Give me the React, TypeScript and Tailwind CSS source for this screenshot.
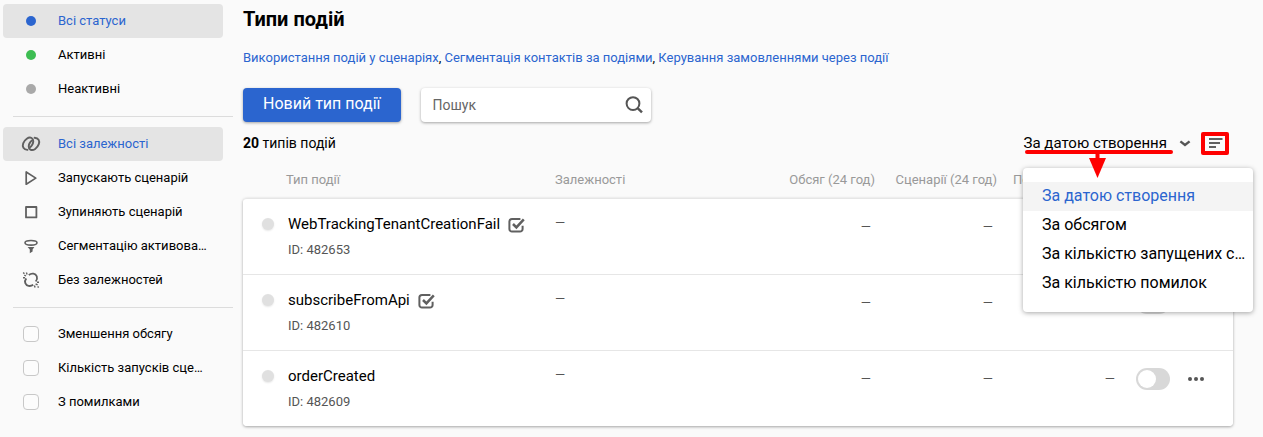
import type { ReactNode } from 'react';

const statuses = [
  { label: 'Всі статуси', color: 'bg-[#2b65cf]', active: true },
  { label: 'Активні', color: 'bg-[#3dbd52]', active: false },
  { label: 'Неактивні', color: 'bg-[#a9a9a9]', active: false },
];

const LinksIcon = () => (
  <svg width="20" height="20" viewBox="0 0 20 20" fill="none" stroke="currentColor" strokeWidth="1.9" strokeLinecap="round">
    <path d="M6.4 15.9C2.6 15.6 1 12.6 2.2 9.4C3.6 5.6 7.6 2.4 10.6 4C13.2 5.5 12.4 9 10.9 11.2C10.4 12 9.8 12.6 9 13.2" />
    <path d="M13.6 3.7C17.4 4 19 7 17.8 10.2C16.4 14 12.4 17.2 9.4 15.6C6.8 14.1 7.6 10.6 9.1 8.4C9.6 7.6 10.2 7 11 6.4" />
  </svg>
);

const PlayIcon = () => (
  <svg width="20" height="20" viewBox="0 0 20 20" fill="none" stroke="currentColor" strokeWidth="1.7" strokeLinejoin="round">
    <path d="M5.2 4V16.2L14.8 10.1Z" />
  </svg>
);

const StopIcon = () => (
  <svg width="20" height="20" viewBox="0 0 20 20" fill="none" stroke="currentColor" strokeWidth="1.8" strokeLinejoin="round">
    <rect x="5" y="5" width="10.4" height="10.4" />
  </svg>
);

const FunnelIcon = () => (
  <svg width="20" height="20" viewBox="0 0 20 20" fill="none" stroke="currentColor" strokeWidth="1.6">
    <ellipse cx="10" cy="6.8" rx="6" ry="2.3" />
    <path d="M6.6 11H13.4L11.6 13.4V15.6L8.8 17.2V13.4Z" fill="currentColor" stroke="none" />
  </svg>
);

const UnlinkIcon = () => (
  <svg width="20" height="20" viewBox="0 0 20 20" fill="none" stroke="currentColor" strokeWidth="1.8">
    <path d="M7.8 5C10.8 2.6 14.5 3.4 15.8 6.4C16.6 8.6 15.9 10.1 14.7 11.5" />
    <path d="M12.2 14.7C9.2 17 5.4 16 4.3 13.2C3.6 11.2 4.2 9.8 5.3 8.4" />
    <path d="M3.3 5.1L5 6M5.4 2.6L6.1 4.4M2 7.8H4M2.2 2.6L3.4 3.8M14.6 13.8L16.6 14.9M13.4 15.4L14.1 17.4M16 12.2H18M16.6 16.4L17.7 17.5" strokeWidth="1.4" />
  </svg>
);

const dependencies = [
  { label: 'Всі залежності', icon: <LinksIcon />, active: true },
  { label: 'Запускають сценарій', icon: <PlayIcon />, active: false },
  { label: 'Зупиняють сценарій', icon: <StopIcon />, active: false },
  { label: 'Сегментацію активова…', icon: <FunnelIcon />, active: false },
  { label: 'Без залежностей', icon: <UnlinkIcon />, active: false },
];

const filters = ['Зменшення обсягу', 'Кількість запусків сце…', 'З помилками'];

const links = [
  'Використання подій у сценаріях',
  'Сегментація контактів за подіями',
  'Керування замовленнями через події',
];

const sortOptions = ['За датою створення', 'За обсягом', 'За кількістю запущених с…', 'За кількістю помилок'];

const events = [
  { name: 'WebTrackingTenantCreationFail', id: 482653, checked: true },
  { name: 'subscribeFromApi', id: 482610, checked: true },
  { name: 'orderCreated', id: 482609, checked: false },
];

function NavItem({ label, active, children }: { label: string; active: boolean; children: ReactNode }) {
  return (
    <li>
      <button
        type="button"
        className={
          active
            ? 'flex h-[34px] w-full items-center rounded bg-[#e4e4e4] pl-[18px] text-left text-[#2b65cf]'
            : 'flex h-[34px] w-full items-center rounded pl-[18px] text-left text-black'
        }
      >
        <span className="mr-[17px] flex w-5 justify-center text-[#606060]">{children}</span>
        <span className="pb-px">{label}</span>
      </button>
    </li>
  );
}

const CheckedIcon = () => (
  <svg width="18" height="16" viewBox="0 0 18 16" fill="none" stroke="#606060">
    <path d="M12.4 2H4A2.6 2.6 0 0 0 1.4 4.6V12A2.6 2.6 0 0 0 4 14.6H12A2.6 2.6 0 0 0 14.6 12V8.8" strokeWidth="2" />
    <path d="M5 7L8.4 10.4L15.8 2.4" strokeWidth="2.5" />
  </svg>
);

function EventRow({ name, id, checked, position }: { name: string; id: number; checked: boolean; position: 'first' | 'middle' | 'last' }) {
  const left = position === 'first' ? 'rounded-tl' : position === 'last' ? 'rounded-bl' : '';
  const right = position === 'first' ? 'rounded-tr' : position === 'last' ? 'rounded-br' : '';
  return (
    <tr className="h-[76px] align-top text-[#555]">
      <td className={`border-t border-[#e6e6e6] bg-white pt-[14px] pl-[19px] ${left}`}>
        <div className="flex items-center">
          <span className="mr-[14px] size-3 shrink-0 rounded-full bg-[#e0e0e0] shadow-[0_1px_2px_rgba(0,0,0,0.1)]" />
          <span className="text-[15px] leading-[22px] text-black">{name}</span>
          {checked && (
            <span className="mt-[2px] ml-2">
              <CheckedIcon />
            </span>
          )}
        </div>
        <div className="mt-[5px] pl-[26px] text-[13px] leading-5">ID: {id}</div>
      </td>
      <td className="border-t border-[#e6e6e6] bg-white pt-[14px] text-[13px] leading-5">—</td>
      <td className="border-t border-[#e6e6e6] bg-white pt-[18px] pr-1 text-right text-[13px] leading-5">—</td>
      <td className="border-t border-[#e6e6e6] bg-white pt-[18px] pr-1 text-right text-[13px] leading-5">—</td>
      <td className="border-t border-[#e6e6e6] bg-white pt-[18px] pr-1 text-right text-[13px] leading-5">—</td>
      <td className={`border-t border-[#e6e6e6] bg-white pt-[17px] pl-[17px] ${right}`}>
        <div className="flex items-center gap-[18px]">
          <input
            type="checkbox"
            role="switch"
            aria-label={name}
            className="h-[22px] w-[34px] appearance-none rounded-full bg-[#d8d8d8] p-[2px] before:block before:size-[18px] before:rounded-full before:bg-white"
          />
          <button type="button" aria-label="Меню">
            <svg width="16" height="6" viewBox="0 0 16 6" fill="#555">
              <circle cx="2" cy="3" r="2" />
              <circle cx="8" cy="3" r="2" />
              <circle cx="14" cy="3" r="2" />
            </svg>
          </button>
        </div>
      </td>
    </tr>
  );
}

export default function App() {
  return (
    <div className="flex min-h-screen items-start bg-[#fafafa] font-['Roboto',sans-serif] text-[13px] leading-5 text-black">
      <aside className="w-[243px] shrink-0 pt-1 pl-[3px]">
        <ul className="w-[220px]">
          {statuses.map((s) => (
            <NavItem key={s.label} label={s.label} active={s.active}>
              <span className={`size-[10px] rounded-full ${s.color}`} />
            </NavItem>
          ))}
        </ul>
        <hr className="mt-[10px] mb-[10px] ml-[10px] w-[220px] border-[#dcdcdc]" />
        <ul className="w-[220px]">
          {dependencies.map((d) => (
            <NavItem key={d.label} label={d.label} active={d.active}>
              {d.icon}
            </NavItem>
          ))}
        </ul>
        <hr className="mt-[10px] mb-[9px] ml-[10px] w-[220px] border-[#dcdcdc]" />
        <ul className="w-[220px]">
          {filters.map((f) => (
            <li key={f}>
              <label className="flex h-[34px] items-center pl-5">
                <input
                  type="checkbox"
                  className="mr-[19px] size-4 shrink-0 appearance-none rounded-[4px] border border-[#c8c8c8] bg-[#fcfcfc]"
                />
                {f}
              </label>
            </li>
          ))}
        </ul>
      </aside>

      <main className="min-w-0 flex-1 pt-[5px] pr-[30px]">
        <h1 className="text-xl leading-7 font-bold">Типи подій</h1>
        <nav className="mt-[15px]">
          {links.map((l, i) => (
            <span key={l}>
              {i > 0 && ', '}
              <a href="#" className="text-[#2b65cf]">
                {l}
              </a>
            </span>
          ))}
        </nav>

        <div className="mt-5 flex gap-5">
          <button
            type="button"
            className="h-[34px] rounded bg-[#2b65cf] px-5 pb-[2px] text-base text-white shadow-[0_1px_3px_rgba(0,0,0,0.35)]"
          >
            Новий тип події
          </button>
          <div className="flex h-[34px] w-[230px] items-center rounded bg-white pr-2 pl-3 shadow-[0_1px_3px_rgba(0,0,0,0.35)]">
            <input
              type="text"
              placeholder="Пошук"
              aria-label="Пошук"
              className="min-w-0 flex-1 text-sm outline-none placeholder:text-[#666]"
            />
            <svg width="18" height="18" viewBox="0 0 18 18" fill="none" stroke="#555" strokeWidth="2">
              <circle cx="8" cy="7.6" r="6.4" />
              <path d="M12.6 12.2L17 16.4" strokeWidth="2.4" />
            </svg>
          </div>
        </div>

        <div className="mt-[10px] flex h-[23px] items-center justify-between text-sm">
          <div className="pb-[2px]">
            <b>20</b> типів подій
          </div>
          <div className="relative flex h-full items-center">
            <button type="button" aria-haspopup="listbox" aria-expanded="true" className="flex items-center text-[15px]">
              За датою створення
              <svg className="ml-3" width="12" height="8" viewBox="0 0 12 8" fill="none" stroke="#555" strokeWidth="2.4">
                <path d="M1.4 2.4L6 6L10.6 2.4" />
              </svg>
            </button>
            <button
              type="button"
              aria-label="Порядок сортування"
              className="mr-1 ml-[10px] flex h-[23px] w-7 items-center justify-center rounded-[2px] border-4 border-[#fe0000] pl-px"
            >
              <svg width="14" height="11" viewBox="0 0 14 11" fill="none" stroke="#606060" strokeWidth="2">
                <path d="M0 1H13.5M0 5H11M0 9H7" />
              </svg>
            </button>

            <ul
              role="listbox"
              aria-label="Сортування"
              className="absolute top-9 -right-5 z-10 w-[230px] rounded bg-white py-[14px] text-base leading-[27px] shadow-[0_1px_5px_rgba(0,0,0,0.35)]"
            >
              {sortOptions.map((o, i) => (
                <li
                  key={o}
                  role="option"
                  aria-selected={i === 0}
                  className={i === 0 ? 'bg-[#f4f4f4] pb-[2px] pl-[19px] whitespace-nowrap text-[#2b65cf]' : 'pb-[2px] pl-[19px] whitespace-nowrap'}
                >
                  {o}
                </li>
              ))}
            </ul>
            <svg className="pointer-events-none absolute top-4 right-[58px] z-20" width="152" height="32" viewBox="0 0 152 32">
              <path d="M4 4H148" stroke="#fe0000" strokeWidth="4" strokeLinecap="round" />
              <path d="M74.5 4V12" stroke="#fe0000" strokeWidth="4" />
              <path d="M66 10H83L74.5 30Z" fill="#fe0000" />
            </svg>
          </div>
        </div>

        <table className="mt-[15px] w-full table-fixed border-separate border-spacing-0">
          <colgroup>
            <col className="w-[312px]" />
            <col />
            <col className="w-[122px]" />
            <col className="w-[122px]" />
            <col className="w-[122px]" />
            <col className="w-[114px]" />
          </colgroup>
          <thead>
            <tr className="h-7 align-top whitespace-nowrap text-[#999]">
              <th className="pl-[43px] text-left font-normal">Тип події</th>
              <th className="text-left font-normal">Залежності</th>
              <th className="text-right font-normal">Обсяг (24 год)</th>
              <th className="text-right font-normal">Сценарії (24 год)</th>
              <th className="text-right font-normal">Помилки (24 год)</th>
              <td />
            </tr>
          </thead>
          <tbody className="rounded shadow-[0_1px_3px_rgba(0,0,0,0.35)]">
            {events.map((e, i) => (
              <EventRow
                key={e.id}
                name={e.name}
                id={e.id}
                checked={e.checked}
                position={i === 0 ? 'first' : i === events.length - 1 ? 'last' : 'middle'}
              />
            ))}
          </tbody>
        </table>
      </main>
    </div>
  );
}
